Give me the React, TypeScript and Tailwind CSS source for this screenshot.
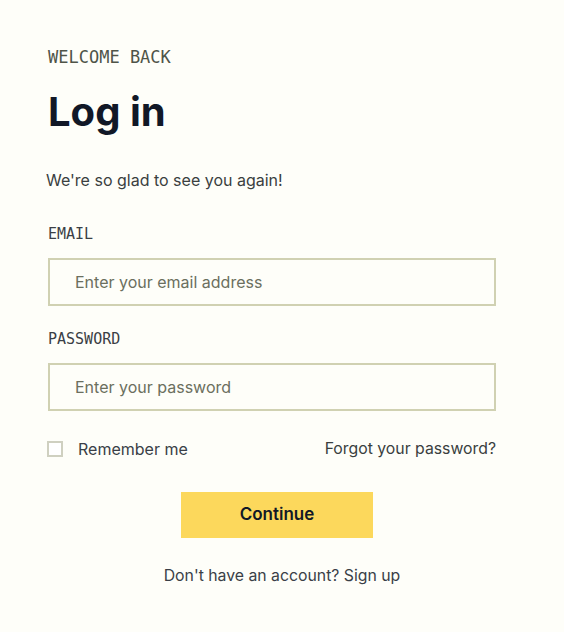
export default function App() {
  return (
    <div className="min-h-screen w-[564px] bg-[#fefef9] font-['Inter',sans-serif] text-[#374151]">
      <div className="flex flex-col px-12 pt-[45px]">
        <p className="font-['DejaVu_Sans_Mono',monospace] text-[17px] leading-6 text-[#4f5448]">WELCOME BACK</p>
        <h1 className="mt-[19px] text-[40px] font-bold leading-[48px] text-[#111827]">Log in</h1>
        <p className="mt-[32px] -ml-[2px] text-base leading-6 text-[#3a3f3f]">We&apos;re so glad to see you again!</p>

        <form className="mt-[30px] flex w-[448px] flex-col">
          <label className="font-['DejaVu_Sans_Mono',monospace] text-[15px] leading-6 text-[#3b3f45]">EMAIL</label>
          <input
            type="email"
            placeholder="Enter your email address"
            className="mt-[12px] h-12 w-full border-2 border-[#d0d1b2] bg-transparent px-[25px] text-base text-[#374151] outline-none placeholder:text-[#6b6f5e]"
          />

          <label className="mt-[21px] font-['DejaVu_Sans_Mono',monospace] text-[15px] leading-6 text-[#3b3f45]">PASSWORD</label>
          <input
            type="password"
            placeholder="Enter your password"
            className="mt-[12px] h-12 w-full border-2 border-[#d0d1b2] bg-transparent px-[25px] text-base text-[#374151] outline-none placeholder:text-[#6b6f5e]"
          />

          <div className="mt-[26px] flex items-center justify-between">
            <label className="flex items-center gap-[15px]">
              <span className="h-[16px] w-[16px] -ml-[1px] border-2 border-[#cfd0c0] bg-white" />
              <span className="text-base text-[#3a3f47]">Remember me</span>
            </label>
            <a href="#" className="text-[15.8px] text-[#3a3f3f]">Forgot your password?</a>
          </div>

          <div className="mt-[31px] flex justify-center pl-[10px]">
            <button type="button" className="h-[46px] w-[192px] bg-[#fcd85c] text-[17px] font-semibold text-[#111827]">
              Continue
            </button>
          </div>
        </form>

        <p className="mt-[26px] pl-[20px] text-center text-[15.8px] text-[#3a3f47] w-[448px]">
          Don&apos;t have an account? Sign up
        </p>
      </div>
    </div>
  );
}
